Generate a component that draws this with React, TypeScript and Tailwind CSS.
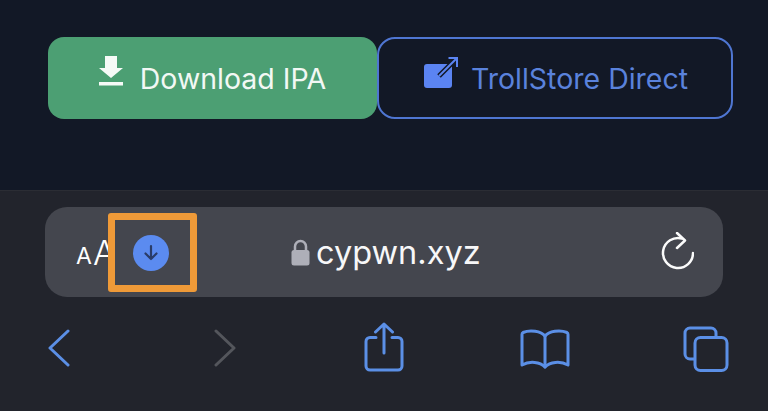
export default function App() {
  return (
    <div className="flex h-[411px] w-[768px] flex-col overflow-hidden bg-[#22242c] font-['Inter',sans-serif]">
      <div className="flex h-[190px] shrink-0 items-start bg-[#121826] pl-[48px] pt-[37px]">
        <div className="flex h-[82px] w-[329px] items-center justify-center rounded-[16px] bg-[#4c9f73] pt-[2px] text-[#f2f8f4]">
          <svg viewBox="0 0 24 30" className="mb-[16px] mr-[17px] h-[30px] w-[24px]">
            <path d="M6 0h12v12h6L12 22 0 12h6z" fill="#f6faf7" />
            <rect x="0" y="26" width="24" height="3.500" fill="#f6faf7" />
          </svg>
          <span className="text-[28.500px] leading-none">Download IPA</span>
        </div>
        <div className="flex h-[82px] w-[356px] items-center justify-center rounded-[18px] border-2 border-[#4f76d2] pl-[2px] pt-[2px] text-[#5a82dc]">
          <svg viewBox="0 0 34 31" className="mb-[14px] mr-[13px] h-[31px] w-[34px]">
            <rect x="0" y="7" width="28" height="24" rx="3" fill="#5b84f2" />
            <path d="M15 19 L33 1 M24.500 1h9v9" fill="none" stroke="#121826" strokeWidth="5" />
            <path d="M15 19 L33 1 M24.500 1h8.500v9" fill="none" stroke="#5b84f2" strokeWidth="2" />
          </svg>
          <span className="text-[28.500px] leading-none">TrollStore Direct</span>
        </div>
      </div>

      <div className="flex flex-1 flex-col border-t border-[#2b2d34] px-[45px] pt-[16px]">
        <div className="relative flex h-[90px] w-[678px] shrink-0 items-center rounded-[22px] bg-[#44464e] text-white">
          <span className="ml-[31px] mt-[9px] text-[23px] leading-none">A</span>
          <span className="ml-[1px] mt-[2px] text-[34px] font-light leading-none">A</span>

          <div className="absolute left-[63px] top-[6px] flex h-[79px] w-[89px] items-center justify-center rounded-[3px] border-[7px] border-[#ef9a38] bg-[#44464e] pr-[3px]">
            <div className="flex h-[36px] w-[36px] items-center justify-center rounded-full bg-[#5b8bf0]">
              <svg viewBox="0 0 20 20" className="h-[20px] w-[20px]" fill="none" stroke="#2a3c68" strokeWidth="2.200" strokeLinecap="round" strokeLinejoin="round">
                <path d="M10 3v13M4.500 10.500 10 16l5.500-5.500" />
              </svg>
            </div>
          </div>

          <svg viewBox="0 0 19 27" className="absolute left-[246px] top-[32px] h-[27px] w-[19px]">
            <path d="M4 12V7.500a5.500 5.500 0 0 1 11 0V12" fill="none" stroke="#aeafb8" strokeWidth="2.500" />
            <rect x="0.500" y="11" width="18" height="15.500" rx="2.500" fill="#aeafb8" />
          </svg>
          <span className="absolute left-[271px] top-[30px] text-[32.500px] leading-none text-[#f7f7f8]">cypwn.xyz</span>

          <svg viewBox="0 0 34 38" className="absolute left-[615px] top-[25px] h-[38px] w-[34px]" fill="none" stroke="#fbfbfb" strokeWidth="2.500" strokeLinecap="round" strokeLinejoin="round">
            <path d="M22 6.500A15 15 0 1 0 33 21" />
            <path d="M17 1 25 8.500 17 16" />
          </svg>
        </div>

        <div className="flex w-[684px] flex-1 items-start pt-[25px] text-[#5b8fe6]">
          <svg viewBox="0 0 22 38" className="ml-[3px] mt-[7px] h-[38px] w-[22px]" fill="none" stroke="currentColor" strokeWidth="3" strokeLinecap="round" strokeLinejoin="round">
            <path d="M20 2 2 19 20 36" />
          </svg>
          <svg viewBox="0 0 22 38" className="ml-[144px] mt-[7px] h-[38px] w-[22px]" fill="none" stroke="#54565c" strokeWidth="3" strokeLinecap="round" strokeLinejoin="round">
            <path d="M2 2 20 19 2 36" />
          </svg>
          <svg viewBox="0 0 40 50" className="ml-[128px] h-[50px] w-[40px]" fill="none" stroke="currentColor" strokeWidth="3" strokeLinecap="round" strokeLinejoin="round">
            <path d="M12 15.500H6a4 4 0 0 0-4 4V44a4 4 0 0 0 4 4h28a4 4 0 0 0 4-4V19.500a4 4 0 0 0-4-4h-6" />
            <path d="M20 31V2M11.500 10 20 2l8.500 8" />
          </svg>
          <svg viewBox="0 0 50 40" className="ml-[116px] mt-[7px] h-[40px] w-[50px]" fill="none" stroke="currentColor" strokeWidth="3" strokeLinecap="round" strokeLinejoin="round">
            <path d="M25 7C21 2 10 0.500 3 3.500Q2 4 2 5.500V36C10 31.500 20 33 25 38 30 33 40 31.500 48 36V5.500Q48 4 47 3.500C40 0.500 29 2 25 7Z" />
            <path d="M25 7V38" />
          </svg>
          <svg viewBox="0 0 46 46" className="ml-[113px] mt-[4px] h-[46px] w-[46px]" fill="none" stroke="currentColor" strokeWidth="3">
            <path d="M11 33H7a5 5 0 0 1-5-5V7a5 5 0 0 1 5-5h21a5 5 0 0 1 5 5v4" />
            <rect x="12" y="11.500" width="32" height="33" rx="5.500" />
          </svg>
        </div>
      </div>
    </div>
  );
}
